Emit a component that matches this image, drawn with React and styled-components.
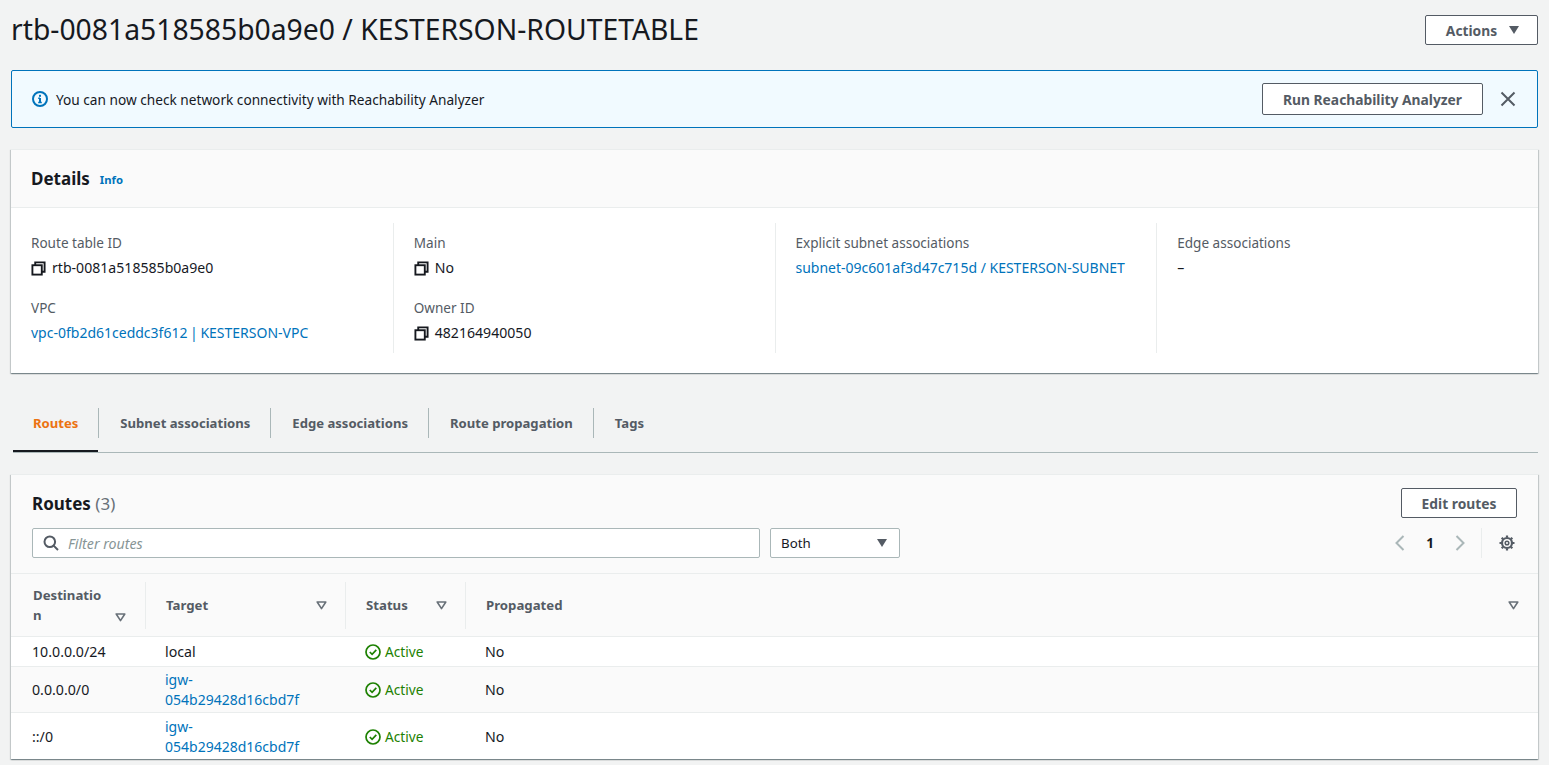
import React from "react";
import styled, { createGlobalStyle } from "styled-components";

const GlobalStyle = createGlobalStyle`
  html, body {
    margin: 0;
    padding: 0;
    background: #f2f3f3;
    font-family: "Noto Sans", "Open Sans", sans-serif;
    font-size: 14px;
    color: #16191f;
  }
  * { box-sizing: border-box; }
`;

const Page = styled.div`
  width: 1549px;
  height: 765px;
  overflow: hidden;
  padding: 0 11px;
`;

const TitleBar = styled.div`
  display: flex;
  justify-content: space-between;
  align-items: center;
  height: 70px;
  padding-bottom: 10px;
`;

const Title = styled.h1`
  margin: 0;
  font-size: 28.3px;
  line-height: 32px;
  font-weight: 400;
  color: #16191f;
  transform: translateY(-1px);
`;

const Button = styled.button`
  display: flex;
  align-items: center;
  justify-content: center;
  gap: 12px;
  height: ${p => p.$h || 30}px;
  width: ${p => p.$w}px;
  background: #fff;
  border: 1px solid #545b64;
  border-radius: 2px;
  color: #545b64;
  font-family: inherit;
  font-size: 13.8px;
  font-weight: 700;
  padding: 0;
`;

const ActionsButton = styled(Button)`
  padding-left: 2px;
`;

const Caret = styled.span`
  display: block;
  width: 0;
  height: 0;
  border-left: 5.5px solid transparent;
  border-right: 5.5px solid transparent;
  border-top: 8px solid #545b64;
`;

const Alert = styled.div`
  display: flex;
  align-items: center;
  height: 58px;
  padding: 0 20px;
  background: #f1faff;
  border: 1px solid #0073bb;
  border-radius: 2px;
  gap: 8px;
`;

const AlertText = styled.span`
  flex: 1;
  font-size: 13.67px;
  color: #16191f;
`;

const CloseButton = styled.span`
  display: flex;
  margin-left: 9px;
  margin-right: 1px;
`;

const Card = styled.section`
  background: #fff;
  margin-top: ${p => p.$top || 0}px;
  border-top: 1px solid #eaeded;
  box-shadow: 0 1px 1px 0 rgba(0, 28, 36, 0.3), 1px 1px 1px 0 rgba(0, 28, 36, 0.15),
    -1px 1px 1px 0 rgba(0, 28, 36, 0.15);
`;

const CardHeader = styled.div`
  display: flex;
  align-items: center;
  gap: 10px;
  height: 58px;
  padding: 0 20px;
  background: #fafafa;
  border-bottom: 1px solid #eaeded;
`;

const CardTitle = styled.h2`
  margin: 0;
  font-size: 17px;
  font-weight: 700;
  color: #16191f;
`;

const InfoLink = styled.a`
  font-size: 11.3px;
  font-weight: 700;
  color: #0073bb;
  margin-top: 2px;
`;

const DetailGrid = styled.div`
  display: grid;
  grid-template-columns: repeat(4, 1fr);
  padding: 15px 0 20px;
  height: 165px;
`;

const DetailColumn = styled.div`
  padding: 10px 20px 0;
  border-left: ${p => (p.$first ? "none" : "1px solid #eaeded")};
  display: flex;
  flex-direction: column;
  gap: 20px;
`;

const Field = styled.div`
  display: flex;
  flex-direction: column;
  gap: 5px;
  line-height: 20px;
`;

const Label = styled.div`
  color: #545b64;
  font-size: 13.55px;
`;

const Value = styled.div`
  display: flex;
  align-items: center;
  gap: 6px;
  font-size: 14.1px;
  color: #16191f;
`;

const Link = styled.a`
  color: #0073bb;
  font-size: 14px;
`;

const TightLink = styled(Link)`
  word-spacing: -1px;
`;

const Tabs = styled.nav`
  display: flex;
  align-items: flex-start;
  height: 45px;
  margin: 35px 0 21px 2px;
  border-bottom: 1px solid #aab7b8;
`;

const Tab = styled.div`
  position: relative;
  display: flex;
  align-items: center;
  height: 30px;
  padding: 0 20px 0 ${p => (p.$first ? 20 : 21)}px;
  font-size: 13.1px;
  font-weight: 700;
  color: ${p => (p.$active ? "#ec7211" : "#545b64")};
  border-left: ${p => (p.$first ? "none" : "1px solid #aab7b8")};
  &::after {
    content: "";
    display: ${p => (p.$active ? "block" : "none")};
    position: absolute;
    left: 0;
    right: 0;
    bottom: -14px;
    height: 2px;
    background: #16191f;
  }
`;

const RoutesHead = styled.div`
  background: #fafafa;
  padding: 13px 21px 15px;
  height: 99px;
  border-bottom: 1px solid #eaeded;
`;

const HeadRow = styled.div`
  display: flex;
  align-items: center;
  justify-content: space-between;
`;

const RoutesTitle = styled(CardTitle)`
  & > span {
    font-weight: 400;
    color: #687078;
  }
`;

const ToolRow = styled.div`
  display: flex;
  align-items: center;
  gap: 10px;
  margin-top: 10px;
`;

const SearchBox = styled.div`
  display: flex;
  align-items: center;
  gap: 9px;
  width: 728px;
  height: 30px;
  padding: 0 10px;
  background: #fff;
  border: 1px solid #aab7b8;
  border-radius: 2px;
`;

const Placeholder = styled.span`
  font-style: italic;
  color: #879596;
  font-size: 14.2px;
`;

const Select = styled.div`
  display: flex;
  align-items: center;
  justify-content: space-between;
  width: 130px;
  height: 30px;
  padding: 0 12px 0 10px;
  background: #fff;
  border: 1px solid #aab7b8;
  border-radius: 2px;
  font-size: 13.3px;
`;

const Pager = styled.div`
  display: flex;
  align-items: center;
  margin-left: auto;
  margin-right: 2px;
  color: #16191f;
  font-size: 13.5px;
  font-weight: 700;
  gap: 21px;
`;

const PagerDivider = styled.div`
  width: 1px;
  height: 30px;
  background: #eaeded;
  margin: 0 -4px 0 -5px;
`;

const TableRow = styled.div`
  display: grid;
  grid-template-columns: 134px 200px 120px 1fr;
  align-items: center;
  height: ${p => p.$h}px;
  background: ${p => (p.$alt ? "#fafafa" : "#fff")};
  border-bottom: ${p => (p.$last ? "none" : "1px solid #eaeded")};
`;

const HeaderCell = styled.div`
  display: flex;
  align-items: center;
  justify-content: space-between;
  height: 47px;
  padding: ${p => (p.$first ? "0 19px 0 22px" : p.$last ? "0 19px 0 20px" : "0 18px 0 20px")};
  border-left: ${p => (p.$first ? "none" : "1px solid #eaeded")};
  font-size: 13.2px;
  font-weight: 700;
  color: #545b64;
  line-height: 20px;
`;

const HeaderWrap = styled.div`
  position: relative;
  width: 100%;
`;

const WrappedSort = styled.span`
  position: absolute;
  right: 0;
  bottom: 3px;
  display: flex;
`;

const Cell = styled.div`
  padding: 1px 20px 0 ${p => (p.$first ? 21 : 20)}px;
  line-height: 20px;
  color: #16191f;
  font-size: 14.2px;
`;

const StatusCell = styled(Cell)`
  display: flex;
  align-items: center;
  gap: 4px;
  color: #1d8102;
  font-size: 13.7px;
`;

const CopyIcon = () => (
  <svg width="15" height="15" viewBox="0 0 16 16" fill="none" stroke="#16191f" strokeWidth="2">
    <rect x="1.5" y="4.5" width="10" height="10" />
    <path d="M4.5 4.5V1.5H14.5V11.5H11.5" />
  </svg>
);

const InfoIcon = () => (
  <svg width="16" height="16" viewBox="0 0 16 16" fill="none">
    <circle cx="8" cy="8" r="7" stroke="#0073bb" strokeWidth="2" />
    <path d="M8 7v4.5" stroke="#0073bb" strokeWidth="2" />
    <path d="M6.2 7.2H8M6.2 11.5h3.6" stroke="#0073bb" strokeWidth="1.4" />
    <rect x="7" y="3.8" width="2" height="2" fill="#0073bb" />
  </svg>
);

const CloseIcon = () => (
  <svg width="16" height="16" viewBox="0 0 16 16" fill="none" stroke="#545b64" strokeWidth="2">
    <path d="M1.5 1.5l13 13M14.5 1.5l-13 13" />
  </svg>
);

const SearchIcon = () => (
  <svg width="16" height="16" viewBox="0 0 16 16" fill="none" stroke="#545b64" strokeWidth="2">
    <circle cx="6.8" cy="6.8" r="5.3" />
    <path d="M10.6 10.6l4.4 4.4" />
  </svg>
);

const PagerArrow = ({ right }) => (
  <svg width="10" height="16" viewBox="0 0 10 16" fill="none" stroke="#aab7b8" strokeWidth="2">
    <path d={right ? "M1.5 1l7 7-7 7" : "M8.5 1l-7 7 7 7"} />
  </svg>
);

const GearIcon = () => (
  <svg width="16" height="16" viewBox="0 0 16 16" fill="none" stroke="#545b64">
    <circle cx="8" cy="8" r="5" strokeWidth="2.2" />
    <circle cx="8" cy="8" r="1.8" strokeWidth="1.5" />
    <path d="M8 .5v2M8 13.5v2M.5 8h2M13.5 8h2M2.7 2.7l1.4 1.4M11.9 11.9l1.4 1.4M13.3 2.7l-1.4 1.4M4.1 11.9l-1.4 1.4" strokeWidth="2.2" />
  </svg>
);

const SortIcon = () => (
  <svg width="11" height="9" viewBox="0 0 11 9" fill="none">
    <path d="M1.2 1h8.6L5.5 7.6z" stroke="#687078" strokeWidth="1.6" strokeLinejoin="round" />
  </svg>
);

const ActiveIcon = () => (
  <svg width="16" height="16" viewBox="0 0 16 16" fill="none" stroke="#1d8102" strokeWidth="1.7">
    <circle cx="8" cy="8" r="7" />
    <path d="M4.8 8l2.3 2.3 4.2-4.4" />
  </svg>
);

const routes = [
  { dest: "10.0.0.0/24", target: "local", h: 30 },
  { dest: "0.0.0.0/0", target: "igw-054b29428d16cbd7f", h: 46, alt: true },
  { dest: "::/0", target: "igw-054b29428d16cbd7f", h: 46, last: true },
];

const Details = () => (
  <Card $top={21}>
    <CardHeader>
      <CardTitle>Details</CardTitle>
      <InfoLink>Info</InfoLink>
    </CardHeader>
    <DetailGrid>
      <DetailColumn $first>
        <Field>
          <Label>Route table ID</Label>
          <Value><CopyIcon />rtb-0081a518585b0a9e0</Value>
        </Field>
        <Field>
          <Label>VPC</Label>
          <TightLink>vpc-0fb2d61ceddc3f612 | KESTERSON-VPC</TightLink>
        </Field>
      </DetailColumn>
      <DetailColumn>
        <Field>
          <Label>Main</Label>
          <Value><CopyIcon />No</Value>
        </Field>
        <Field>
          <Label>Owner ID</Label>
          <Value><CopyIcon />482164940050</Value>
        </Field>
      </DetailColumn>
      <DetailColumn>
        <Field>
          <Label>Explicit subnet associations</Label>
          <Link>subnet-09c601af3d47c715d / KESTERSON-SUBNET</Link>
        </Field>
      </DetailColumn>
      <DetailColumn>
        <Field>
          <Label>Edge associations</Label>
          <Value>–</Value>
        </Field>
      </DetailColumn>
    </DetailGrid>
  </Card>
);

const RoutesTable = () => (
  <Card>
    <RoutesHead>
      <HeadRow>
        <RoutesTitle>Routes <span>(3)</span></RoutesTitle>
        <Button $w={116}>Edit routes</Button>
      </HeadRow>
      <ToolRow>
        <SearchBox>
          <SearchIcon />
          <Placeholder>Filter routes</Placeholder>
        </SearchBox>
        <Select>Both<Caret /></Select>
        <Pager>
          <PagerArrow />
          <span>1</span>
          <PagerArrow right />
          <PagerDivider />
          <GearIcon />
        </Pager>
      </ToolRow>
    </RoutesHead>
    <TableRow $h={63} $alt>
      <HeaderCell $first>
        <HeaderWrap>
          Destinatio<br />n
          <WrappedSort><SortIcon /></WrappedSort>
        </HeaderWrap>
      </HeaderCell>
      <HeaderCell>Target<SortIcon /></HeaderCell>
      <HeaderCell>Status<SortIcon /></HeaderCell>
      <HeaderCell $last>Propagated<SortIcon /></HeaderCell>
    </TableRow>
    {routes.map(r => (
      <TableRow key={r.dest} $h={r.h} $alt={r.alt} $last={r.last}>
        <Cell $first>{r.dest}</Cell>
        <Cell>
          {r.target === "local" ? r.target : <Link>igw-<br />054b29428d16cbd7f</Link>}
        </Cell>
        <StatusCell><ActiveIcon />Active</StatusCell>
        <Cell>No</Cell>
      </TableRow>
    ))}
  </Card>
);

export default function App() {
  return (
    <Page>
      <GlobalStyle />
      <TitleBar>
        <Title>rtb-0081a518585b0a9e0 / KESTERSON-ROUTETABLE</Title>
        <ActionsButton $w={113}>Actions<Caret /></ActionsButton>
      </TitleBar>
      <Alert>
        <InfoIcon />
        <AlertText>You can now check network connectivity with Reachability Analyzer</AlertText>
        <Button $w={221} $h={32}>Run Reachability Analyzer</Button>
        <CloseButton><CloseIcon /></CloseButton>
      </Alert>
      <Details />
      <Tabs>
        <Tab $first $active>Routes</Tab>
        <Tab>Subnet associations</Tab>
        <Tab>Edge associations</Tab>
        <Tab>Route propagation</Tab>
        <Tab>Tags</Tab>
      </Tabs>
      <RoutesTable />
    </Page>
  );
}
